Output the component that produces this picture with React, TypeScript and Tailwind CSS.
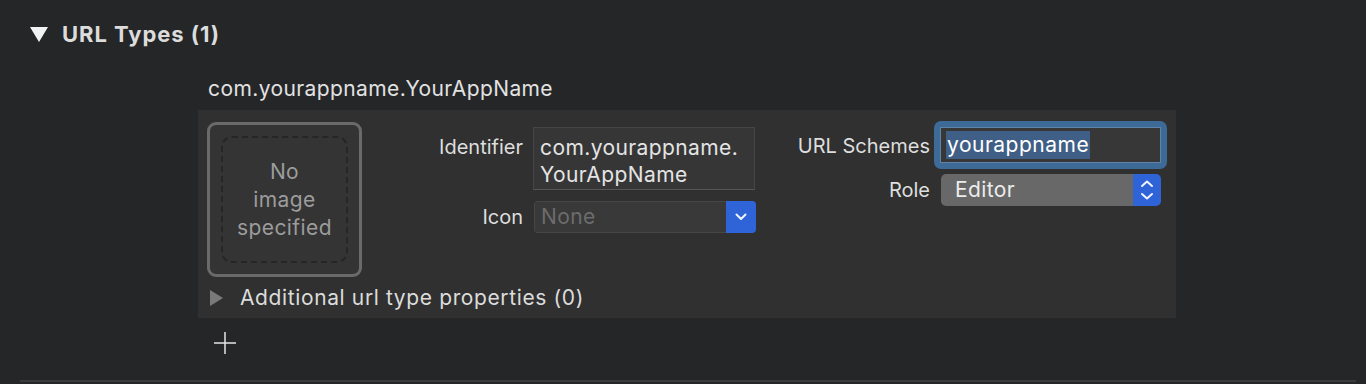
import React from "react";

function Triangle({ dir, color, w, h }: { dir: "down" | "right"; color: string; w: number; h: number }) {
  return (
    <svg width={w} height={h} viewBox={`0 0 ${w} ${h}`} className="shrink-0">
      {dir === "down" ? (
        <polygon points={`0,0 ${w},0 ${w / 2},${h}`} fill={color} />
      ) : (
        <polygon points={`0,0 ${w},${h / 2} 0,${h}`} fill={color} />
      )}
    </svg>
  );
}

export default function App() {
  return (
    <div className="w-[1366px] h-[384px] bg-[#252628] overflow-hidden font-['Inter',sans-serif] text-[#dedede] flex flex-col">
      {/* Header */}
      <div className="h-[68px] flex items-center pl-[30px] gap-[14px]">
        <Triangle dir="down" color="#f2f2f2" w={18} h={15} />
        <span className="text-[22px] font-bold text-[#dcdcdc] tracking-[0.95px]">URL Types (1)</span>
      </div>

      <div className="ml-[198px] w-[978px] flex flex-col">
        {/* Title */}
        <div className="h-[42px] flex items-center pl-[10px] text-[21px] tracking-[0.4px] text-[#e2e2e2]">
          com.yourappname.YourAppName
        </div>

        {/* Panel */}
        <div className="h-[208px] bg-[#303030] flex flex-col">
          <div className="flex items-start pt-[11px] pl-[9px] h-[167px]">
            {/* Image well */}
            <div className="mt-[1px] w-[155px] h-[155px] rounded-[9px] border-[3px] border-[#6a6a6a] bg-[#343434] p-[11px] shrink-0">
              <div className="w-full h-full rounded-[11px] border-2 border-dashed border-[#262626] flex items-center justify-center text-center text-[21px] tracking-[0.4px] leading-[28px] text-[#9c9c9c]">
                No
                <br />
                image
                <br />
                specified
              </div>
            </div>

            {/* Identifier / Icon */}
            <div className="flex flex-col mt-[6px]">
              <div className="flex items-start">
                <div className="w-[161px] text-right text-[20px] leading-[27px] mt-[7px]">Identifier</div>
                <div className="ml-[10px] w-[222px] h-[63px] bg-[#363636] border border-[#454545] border-b-[#555555] pl-[6px] pt-[6px] text-[21px] tracking-[0.4px] leading-[27px] text-[#e4e4e4]">
                  com.yourappname.
                  <br />
                  YourAppName
                </div>
              </div>
              <div className="flex items-center mt-[11px]">
                <div className="w-[161px] text-right text-[20px] leading-[27px]">Icon</div>
                <div className="ml-[11px] w-[222px] h-[32px] flex rounded-[4px] overflow-hidden">
                  <div className="flex-1 bg-[#393939] border border-[#464646] border-r-0 pl-[6px] flex items-center text-[21px] tracking-[0.4px] text-[#6c6c6c]">
                    None
                  </div>
                  <div className="w-[30px] bg-[#2f64d8] flex items-center justify-center">
                    <svg width="12" height="8" viewBox="0 0 12 8">
                      <polyline points="1.5,1.5 6,6 10.5,1.5" fill="none" stroke="#eef3ff" strokeWidth="2" strokeLinecap="round" strokeLinejoin="round" />
                    </svg>
                  </div>
                </div>
              </div>
            </div>

            {/* URL Schemes / Role */}
            <div className="flex flex-col">
              <div className="flex items-start">
                <div className="w-[174px] text-right text-[20px] leading-[27px] mt-[12px]">URL Schemes</div>
                <div className="ml-[4px] w-[233px] h-[48px] rounded-[7px] bg-[#3d6a97] p-[6px]">
                  <div className="w-full h-full bg-[#373737] border border-[#5f83a9] pl-[5px] flex items-center">
                    <span className="bg-[#3f5f86] text-white text-[21px] tracking-[0.5px] leading-[28px] px-[1px]">yourappname</span>
                  </div>
                </div>
              </div>
              <div className="flex items-center mt-[5px]">
                <div className="w-[174px] text-right text-[20px] leading-[27px]">Role</div>
                <div className="ml-[11px] w-[220px] h-[32px] flex rounded-[5px] overflow-hidden">
                  <div className="flex-1 bg-[#686868] pl-[14px] flex items-center text-[21px] tracking-[0.4px] text-[#ececec]">Editor</div>
                  <div className="w-[28px] bg-[#2f64d8] flex items-center justify-center">
                    <svg width="14" height="22" viewBox="0 0 14 22">
                      <polyline points="2,7 7,2.5 12,7" fill="none" stroke="#eef3ff" strokeWidth="2" strokeLinecap="round" strokeLinejoin="round" />
                      <polyline points="2,15 7,19.5 12,15" fill="none" stroke="#eef3ff" strokeWidth="2" strokeLinecap="round" strokeLinejoin="round" />
                    </svg>
                  </div>
                </div>
              </div>
            </div>
          </div>

          {/* Additional */}
          <div className="h-[41px] flex items-center pl-[12px] gap-[17px]">
            <Triangle dir="right" color="#7a7a7a" w={13} h={16} />
            <span className="text-[21px] tracking-[0.62px] text-[#dcdcdc]">Additional url type properties (0)</span>
          </div>
        </div>

        {/* Plus */}
        <div className="h-[50px] flex items-center pl-[16px]">
          <svg width="22" height="22" viewBox="0 0 22 22">
            <line x1="11" y1="0" x2="11" y2="22" stroke="#e6e6e6" strokeWidth="1.5" />
            <line x1="0" y1="11" x2="22" y2="11" stroke="#e6e6e6" strokeWidth="1.5" />
          </svg>
        </div>
      </div>

      <div className="mt-[12px] ml-[20px] w-[1336px] h-[2px] bg-[#3a3b3d]" />
    </div>
  );
}
